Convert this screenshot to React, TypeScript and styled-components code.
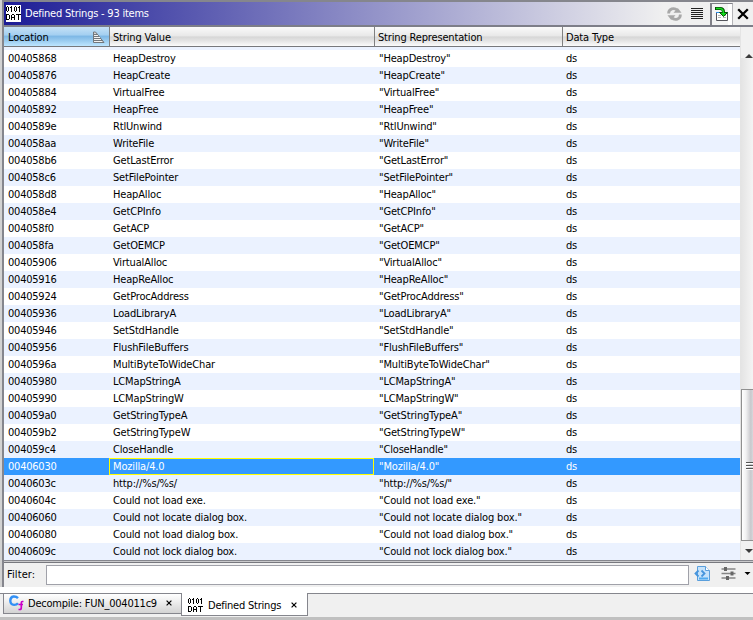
import React from 'react';
import styled, { createGlobalStyle, css } from 'styled-components';

const Global = createGlobalStyle`
  * { box-sizing: border-box; }
  body { margin: 0; overflow: hidden; }
`;

const Window = styled.div`
  width: 753px;
  height: 620px;
  display: flex;
  flex-direction: column;
  background: #f0f0f0;
  border-bottom: 3px solid #c0c0c0;
  font-family: 'DejaVu Sans Condensed', 'DejaVu Sans', sans-serif;
  font-stretch: condensed;
  font-size: 11px;
  letter-spacing: -0.16px;
  color: #000;
  white-space: pre;
  cursor: default;
`;

const Panel = styled.section`
  height: 587px;
  flex: none;
  display: flex;
  flex-direction: column;
  margin-left: 2px;
  border-left: 2px solid #85868d;
  border-top: 2px solid #85868d;
  box-shadow: -2px 0 #d2d2d2;
`;

const TitleBar = styled.header`
  height: 25px;
  flex: none;
  display: flex;
  border-bottom: 2px solid #7d7e88;
  background: #f0f0f0;
`;

const Title = styled.div`
  width: 660px;
  flex: none;
  display: flex;
  align-items: center;
  padding: 0 0 1px 2px;
  gap: 4px;
  letter-spacing: -0.22px;
  color: #fff;
  background: linear-gradient(90deg, #1c1c96 0%, #f0f0f0 100%);
`;

const Tools = styled.div`
  flex: 1;
  display: flex;
  align-items: center;
`;

const ToolButton = styled.span<{ $w: number; $pressed?: boolean }>`
  width: ${p => p.$w}px;
  height: 22px;
  flex: none;
  display: flex;
  align-items: center;
  justify-content: center;
  ${p => p.$pressed && css`
    border: 1px solid #808088;
    border-width: 1px 1px 0 2px;
    border-right-color: #b4b4b8;
    box-shadow: inset -4px 0 #fff;
    background: #f4f4f4;
    padding-right: 1px;
  `}
`;

const Content = styled.div`
  height: 533px;
  flex: none;
  display: flex;
`;

const Table = styled.div`
  width: 736px;
  overflow: hidden;
`;

const HeaderRow = styled.div`
  height: 20px;
  display: grid;
  grid-template-columns: 106px 265px 188px 177px;
  border-bottom: 1px solid #77787c;
`;

const HeaderCell = styled.div<{ $sorted?: boolean; $last?: boolean }>`
  display: flex;
  align-items: center;
  justify-content: space-between;
  padding: 1px 4px 0 ${p => (p.$sorted ? 4 : 3)}px;
  border-right: ${p => (p.$last ? 'none' : '1px solid #808080')};
  background: ${p =>
    p.$sorted
      ? 'linear-gradient(#c5e1f6 0%, #a5d0f1 40%, #7fb9e6 50%, #91c5ec 65%, #bde5ff 100%)'
      : 'linear-gradient(#fafafa 0%, #e9e9e9 45%, #d7d7d7 53%, #e2e2e2 70%, #fbfbfb 100%)'};
`;

const Body = styled.div`
  padding-top: 3px;
  background: #ebf2ff;
`;

const Row = styled.div<{ $selected: boolean }>`
  height: 17px;
  display: grid;
  grid-template-columns: 105px 265px 188px 178px;
  background: #fff;
  &:nth-child(even) { background: #ebf2ff; }
  ${p => p.$selected && css`
    && { background: #3399ff; }
    color: #fff;
  `}
`;

const Cell = styled.div<{ $focused?: boolean; $quoted?: boolean; $address?: boolean }>`
  height: 17px;
  padding-left: ${p => (p.$quoted ? 5 : 4)}px;
  padding-top: 1px;
  line-height: 16px;
  letter-spacing: ${p => (p.$address ? '-0.22px' : 'inherit')};
  ${p => p.$focused && css`
    box-shadow: inset 0 0 0 1px #ffff00;
  `}
`;

const Scroll = styled.div`
  width: 13px;
  display: flex;
  flex-direction: column;
  background: #f1f1f1;
  border-left: 1px solid #e4e4e4;
`;

const ArrowSlot = styled.div<{ $h: number }>`
  height: ${p => p.$h}px;
  display: flex;
  align-items: flex-end;
  justify-content: flex-end;
`;

const Track = styled.div`
  height: 331px;
  background: linear-gradient(90deg, #e4e4e4, #f4f4f4);
`;

const Thumb = styled.div`
  height: 152px;
  display: flex;
  align-items: center;
  justify-content: flex-end;
  border: 1px solid #909090;
  border-width: 1px 0 1px 1px;
  background: linear-gradient(90deg, #fff 0%, #f2f2f3 35%, #c8c8cc 80%, #d8d8dc 100%);
`;

const FilterBar = styled.form`
  height: 27px;
  flex: none;
  display: flex;
  margin: 0;
  border-top: 1px solid #85868d;
  box-shadow: inset 0 1px #c9c9cb, inset 0 2px #77787e;
`;

const FilterLabel = styled.label`
  width: 42px;
  padding: 7px 0 0 3px;
  line-height: 14px;
  letter-spacing: 0.1px;
`;

const FilterInput = styled.input`
  width: 643px;
  height: 20px;
  margin: 4px 0 0;
  padding: 0 4px;
  border: 1px solid #a0a1a9;
  background: #fff;
  font: inherit;
  outline: none;
`;

const FilterTools = styled.div`
  flex: 1;
  padding: 3px 0 0 4px;
`;

const TabStrip = styled.nav`
  height: 30px;
  flex: none;
  display: flex;
  align-items: flex-start;
  padding-left: 3px;
  border-top: 6px solid #fff;
  box-shadow: inset 0 1px #85868d;
`;

const Tab = styled.div<{ $active?: boolean }>`
  display: flex;
  align-items: center;
  border: 1px solid #85868d;
  ${p =>
    p.$active
      ? css`
          width: 127px;
          height: 23px;
          padding: 2px 0 0 6px;
          border-top: none;
          background: #fff;
        `
      : css`
          width: 178px;
          height: 21px;
          padding: 0 0 1px 4px;
          border-right: none;
          background: linear-gradient(#fff 0%, #efefef 40%, #d3d3d3 100%);
        `}
`;

const TabText = styled.span<{ $w: number; $gap: number }>`
  width: ${p => p.$w}px;
  margin-left: ${p => p.$gap}px;
  letter-spacing: -0.22px;
`;

const Bits = styled.span<{ $boxed?: boolean }>`
  display: flex;
  width: 15px;
  height: 17px;
  background: ${p => (p.$boxed ? '#fff' : 'transparent')};
`;

const glyphs: Record<string, string[]> = {
  '0': ['010', '101', '101', '101', '101', '010'],
  '1': ['01', '11', '01', '01', '01', '01'],
  D: ['1110', '1001', '1001', '1001', '1001', '1110'],
  A: ['0110', '1001', '1001', '1111', '1001', '1001'],
  T: ['11111', '00100', '00100', '00100', '00100', '00100'],
};

/* Pixel-grid data icon: a bit pattern above a type label. */
function DataIcon({ boxed }: { boxed?: boolean }) {
  const lines: [string, number[], number][] = [
    ['0101', [0, 4, 8, 12], 1],
    ['DAT', [0, 5, 10], 9],
  ];
  return (
    <Bits $boxed={boxed}>
      <svg width="15" height="17" shapeRendering="crispEdges">
        {lines.map(([word, xs, y]) =>
          word.split('').map((c, i) =>
            glyphs[c].map((bits, r) =>
              bits.split('').map((b, k) =>
                b === '1' ? <rect key={`${i}-${r}-${k}`} x={xs[i] + k} y={y + r} width="1" height="1" /> : null
              )
            )
          )
        )}
      </svg>
    </Bits>
  );
}

const SortIcon = () => (
  <svg width="13" height="13">
    <path d="M1.5 1v10.5H12L3.5 1z" fill="#d5d5d5" stroke="#73777c" />
    <path d="M2 3.5h4M2 5.5h5M2 7.5h7M2 9.5h9" stroke="#73777c" />
    <path d="M2 4.5h4M2 6.5h6M2 8.5h7M2 10.5h8" stroke="#f3f3f3" />
  </svg>
);

const RefreshIcon = () => (
  <svg width="17" height="16" viewBox="0 0 17 16">
    <path d="M2.6 7.5C2.6 2.8 8 1 11.5 4.5" fill="none" stroke="#a8a8a8" strokeWidth="2.8" />
    <path d="M7.500 6.800h8L11.800 2z" fill="#a8a8a8" />
    <path d="M14.400 8.500c0 4.700-5.400 6.500-8.900 3" fill="none" stroke="#a8a8a8" strokeWidth="2.8" />
    <path d="M9.500 9.200h-8L5.200 14z" fill="#a8a8a8" />
  </svg>
);

const LinesIcon = () => (
  <svg width="12" height="12">
    <path d="M0 .5h12M0 2.5h12M0 4.5h12M0 6.5h12M0 8.5h12M0 10.5h12" stroke="#222" />
  </svg>
);

const NavigateIcon = () => (
  <svg width="14" height="16">
    <path d="M1.5 6.5h11v8h-11z" fill="#fff" stroke="#55555c" />
    <path d="M1 6.5h12" stroke="#2f8ff0" />
    <path d="M3 9.5h3M8 9.5h3M3 11.5h3M8 11.5h3" stroke="#b5b5b5" />
    <path d="M0 2.5h5Q8.5 2.5 8.5 6" fill="none" stroke="#064d06" strokeWidth="3" />
    <path d="M4.5 6.5h8L8.5 10.5z" fill="#13d51b" stroke="#064d06" />
    <path d="M1 2.5h4Q8.5 2.5 8.5 8" fill="none" stroke="#16dc20" strokeWidth="1.5" />
  </svg>
);

const CloseIcon = ({ size, weight }: { size: number; weight: number }) => (
  <svg width={size} height={size} viewBox="0 0 10 10">
    <path d="M1 1l8 8M9 1L1 9" stroke="#000" strokeWidth={weight} />
  </svg>
);

const Arrow = ({ up }: { up?: boolean }) => (
  <svg width="8" height="4">
    <path d={up ? 'M4 0l4 4H0z' : 'M0 0h8L4 4z'} fill="#3c3c3c" />
  </svg>
);

const GripIcon = () => (
  <svg width="8" height="9">
    <path d="M1 1.5h7M1 4.5h7M1 7.5h7" stroke="#555" />
    <path d="M1 2.5h7M1 5.5h7M1 8.5h7" stroke="#fff" />
  </svg>
);

const FilterIcons = () => (
  <svg width="59" height="20">
    <path d="M4.5 2.5h8l4 4v10h-12z" fill="#c6e3fb" stroke="#5a9fdc" />
    <path d="M12.5 2.5v4h4" fill="#fff" stroke="#5a9fdc" />
    <path d="M6 14.5h9" stroke="#4faaf0" strokeWidth="2" />
    <path d="M5.5 6.5L2.5 9.5l3 3M8.5 6.5l3 3-3 3" fill="none" stroke="#4695dd" strokeWidth="1.8" />
    <path d="M28.5 5h14M28.5 9.5h14M28.5 14h14" stroke="#858585" strokeWidth="1.6" />
    <path d="M31 3h3v4h-3zM37.5 7.5h3v4h-3zM33 12h3v4h-3z" fill="#666" />
    <path d="M51.5 8h6l-3 3z" fill="#000" />
  </svg>
);

const DecompileIcon = () => (
  <svg width="17" height="18">
    <path d="M10 4.2Q8.2 2.3 5.5 2.5Q2.3 2.9 2.3 6.8Q2.5 10.7 6 10.9Q8.5 11 10 9.2" fill="none" stroke="#3290f5" strokeWidth="2.4" />
    <path d="M15.5 7.5h-1.2q-1 0-1 1.5v4.5q0 2-1.3 2H10.5M10.5 10.5h4.5" fill="none" stroke="#cc00c8" strokeWidth="1.7" />
  </svg>
);

const data: [string, string][] = [
  ['00405868', 'HeapDestroy'],
  ['00405876', 'HeapCreate'],
  ['00405884', 'VirtualFree'],
  ['00405892', 'HeapFree'],
  ['0040589e', 'RtlUnwind'],
  ['004058aa', 'WriteFile'],
  ['004058b6', 'GetLastError'],
  ['004058c6', 'SetFilePointer'],
  ['004058d8', 'HeapAlloc'],
  ['004058e4', 'GetCPInfo'],
  ['004058f0', 'GetACP'],
  ['004058fa', 'GetOEMCP'],
  ['00405906', 'VirtualAlloc'],
  ['00405916', 'HeapReAlloc'],
  ['00405924', 'GetProcAddress'],
  ['00405936', 'LoadLibraryA'],
  ['00405946', 'SetStdHandle'],
  ['00405956', 'FlushFileBuffers'],
  ['0040596a', 'MultiByteToWideChar'],
  ['00405980', 'LCMapStringA'],
  ['00405990', 'LCMapStringW'],
  ['004059a0', 'GetStringTypeA'],
  ['004059b2', 'GetStringTypeW'],
  ['004059c4', 'CloseHandle'],
  ['00406030', 'Mozilla/4.0'],
  ['0040603c', 'http://%s/%s/'],
  ['0040604c', 'Could not load exe.'],
  ['00406060', 'Could not locate dialog box.'],
  ['00406080', 'Could not load dialog box.'],
  ['0040609c', 'Could not lock dialog box.'],
];

const selected = '00406030';

export default function App() {
  return (
    <>
      <Global />
      <Window>
        <Panel>
          <TitleBar>
            <Title><DataIcon boxed />Defined Strings - 93 items</Title>
            <Tools>
              <ToolButton $w={20}><RefreshIcon /></ToolButton>
              <ToolButton $w={26}><LinesIcon /></ToolButton>
              <ToolButton $w={23} $pressed><NavigateIcon /></ToolButton>
              <ToolButton $w={20}><CloseIcon size={12} weight={1.9} /></ToolButton>
            </Tools>
          </TitleBar>
          <Content>
            <Table>
              <HeaderRow>
                <HeaderCell $sorted>Location<SortIcon /></HeaderCell>
                <HeaderCell>String Value</HeaderCell>
                <HeaderCell>String Representation</HeaderCell>
                <HeaderCell $last>Data Type</HeaderCell>
              </HeaderRow>
              <Body>
                {data.map(([loc, value]) => (
                  <Row key={loc} $selected={loc === selected}>
                    <Cell $address>{loc}</Cell>
                    <Cell $focused={loc === selected}>{value}</Cell>
                    <Cell $quoted>{`"${value}"`}</Cell>
                    <Cell>ds</Cell>
                  </Row>
                ))}
              </Body>
            </Table>
            <Scroll>
              <ArrowSlot $h={31}><Arrow up /></ArrowSlot>
              <Track />
              <Thumb><GripIcon /></Thumb>
              <ArrowSlot $h={12}><Arrow /></ArrowSlot>
            </Scroll>
          </Content>
          <FilterBar>
            <FilterLabel htmlFor="filter">Filter:</FilterLabel>
            <FilterInput id="filter" />
            <FilterTools><FilterIcons /></FilterTools>
          </FilterBar>
        </Panel>
        <TabStrip>
          <Tab>
            <DecompileIcon />
            <TabText $w={138} $gap={3}>Decompile: FUN_004011c9</TabText>
            <CloseIcon size={6} weight={2} />
          </Tab>
          <Tab $active>
            <DataIcon />
            <TabText $w={83} $gap={5}>Defined Strings</TabText>
            <CloseIcon size={6} weight={2} />
          </Tab>
        </TabStrip>
      </Window>
    </>
  );
}
